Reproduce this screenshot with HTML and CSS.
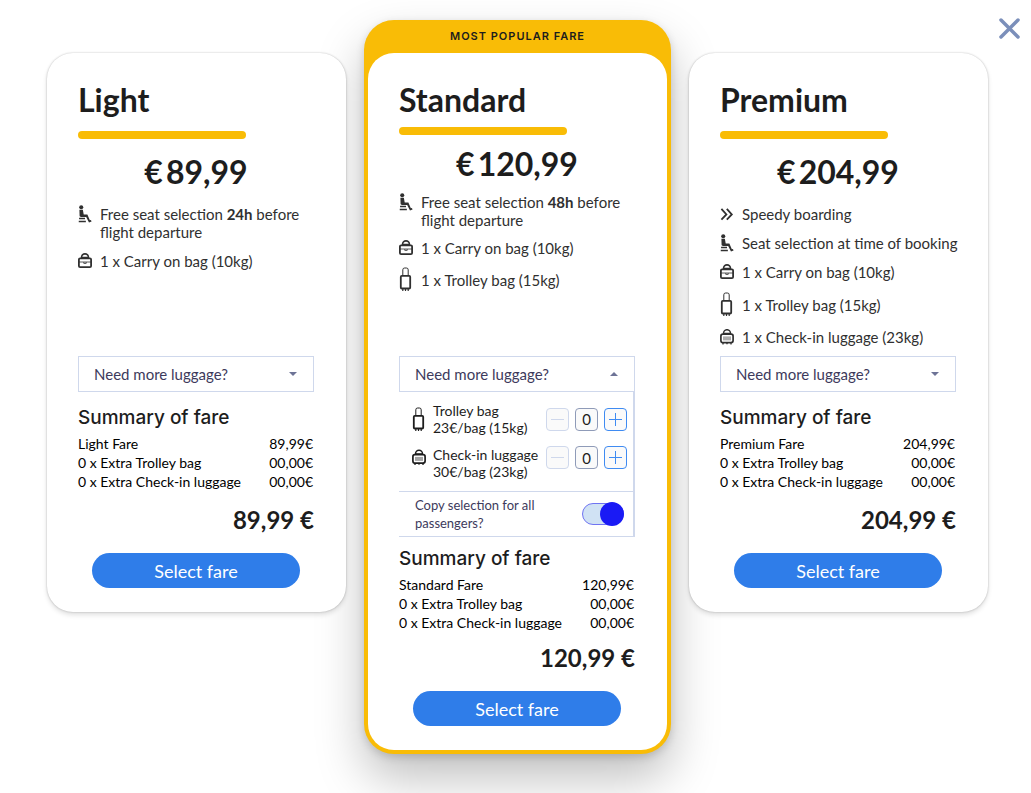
FILE: index.html
```html
<!DOCTYPE html>
<html lang="en">
  <head>
    <meta charset="UTF-8" />
    <meta name="viewport" content="width=device-width, initial-scale=1.0" />
    <title>Choose your fare</title>
    <link rel="stylesheet" href="styles.css">
  </head>
  <body>
    <!-- Icon sprite -->
    <svg class="sprite" aria-hidden="true">
      <symbol id="icon-seat" viewBox="1.500 0.500 13 16.700">
        <circle cx="4.500" cy="2.600" r="1.900" fill="currentColor" />
        <path d="M2.800 5h3.200l.8 4.200h3.400l2.300 5.400 1-.2.6 1.400-2.400.9-2.600-5H4.200L3 11z" fill="currentColor" />
        <path d="M2.500 13h5.500M2.200 15.800h6.600" fill="none" stroke="currentColor" stroke-width="1.500" />
      </symbol>
      <symbol id="icon-carry" viewBox="0 0 14 16">
        <path d="M3.500 5.200V4.400a3.500 3.500 0 0 1 7 0v.8M3.700 4.600h6.600" fill="none" stroke="currentColor" stroke-width="1.600" />
        <rect x=".9" y="5.400" width="12.200" height="8.800" rx="1.200" fill="none" stroke="currentColor" stroke-width="1.800" />
        <path d="M1 9h12M5.800 9v1.400h2.400V9" fill="none" stroke="currentColor" stroke-width=".8" />
      </symbol>
      <symbol id="icon-trolley" viewBox="0 0 14 25">
        <path d="M3.800 9V2.800A1.800 1.800 0 0 1 5.600 1h1.800a1.800 1.800 0 0 1 1.800 1.800V9" fill="none" stroke="currentColor" stroke-width="1" />
        <rect x="1.800" y="8.900" width="9.400" height="12.600" rx="1" fill="none" stroke="currentColor" stroke-width="1.800" />
        <path d="M3.800 22v2M6.500 22v2M9.200 22v2" stroke="currentColor" stroke-width="1.200" />
      </symbol>
      <symbol id="icon-checkin" viewBox="0 0 14 16">
        <path d="M3.500 5.200V4.200a3.500 3.500 0 0 1 7 0v1M3.500 4.600h7" fill="none" stroke="currentColor" stroke-width="1.500" />
        <rect x=".9" y="5.200" width="12.200" height="8.400" rx="2" fill="none" stroke="currentColor" stroke-width="1.700" />
        <path d="M4 7.400v4M6 7.400v4M8 7.400v4M10 7.400v4" stroke="currentColor" stroke-width=".8" />
        <path d="M3 13.600v2M7 13.600v1.600M11 13.600v2" stroke="currentColor" stroke-width="1.300" />
      </symbol>
      <symbol id="icon-speedy" viewBox="0 0 14 18">
        <path d="M1.400 3.800L6.400 9.400l-5 5.200M6.800 3.800l5 5.600-5 5.200" fill="none" stroke="currentColor" stroke-width="1.800" />
      </symbol>
    </svg>

    <button class="close" aria-label="Close">
      <svg width="22" height="22" viewBox="0 0 22 22">
        <path d="M3 2l17 17M20 2L3 19" stroke="currentColor" stroke-width="3.500" stroke-linecap="round" />
      </svg>
    </button>

    <main class="fares">
      <section class="fare">
        <div class="card">
          <div class="card-top">
            <h2>Light</h2>
            <div class="bar"></div>
            <p class="price"><span>€</span><span>89,99</span></p>
            <ul class="features">
              <li class="wrap">
                <svg class="icon"><use href="#icon-seat" /></svg>
                <span>Free seat selection <strong>24h</strong> before<br>flight departure</span>
              </li>
              <li>
                <svg class="icon icon-bag"><use href="#icon-carry" /></svg>
                <span>1 x Carry on bag (10kg)</span>
              </li>
            </ul>
          </div>

          <details class="luggage">
            <summary>Need more luggage?</summary>
          </details>

          <div class="summary">
            <h3>Summary of fare</h3>
            <table>
              <tr><td>Light Fare</td><td>89,99€</td></tr>
              <tr><td>0 x Extra Trolley bag</td><td>00,00€</td></tr>
              <tr><td>0 x Extra Check-in luggage</td><td>00,00€</td></tr>
            </table>
            <p class="total">89,99 €</p>
            <button class="select-fare">Select fare</button>
          </div>
        </div>
      </section>

      <section class="fare popular">
        <div class="ribbon">MOST POPULAR FARE</div>
        <div class="card">
          <div class="card-top">
            <h2>Standard</h2>
            <div class="bar"></div>
            <p class="price"><span>€</span><span>120,99</span></p>
            <ul class="features">
              <li class="wrap">
                <svg class="icon"><use href="#icon-seat" /></svg>
                <span>Free seat selection <strong>48h</strong> before<br>flight departure</span>
              </li>
              <li>
                <svg class="icon icon-bag"><use href="#icon-carry" /></svg>
                <span>1 x Carry on bag (10kg)</span>
              </li>
              <li>
                <svg class="icon icon-trolley"><use href="#icon-trolley" /></svg>
                <span>1 x Trolley bag (15kg)</span>
              </li>
            </ul>
          </div>

          <details class="luggage" open>
            <summary>Need more luggage?</summary>
            <div class="panel">
              <div class="extra">
                <svg class="icon icon-trolley"><use href="#icon-trolley" /></svg>
                <label for="trolley">Trolley bag<br>23€/bag (15kg)</label>
                <div class="stepper">
                  <button class="minus" aria-label="Remove trolley bag" disabled></button>
                  <input type="text" id="trolley" value="0" inputmode="numeric" />
                  <button class="plus" aria-label="Add trolley bag"></button>
                </div>
              </div>
              <div class="extra">
                <svg class="icon icon-bag"><use href="#icon-checkin" /></svg>
                <label for="checkin">Check-in luggage<br>30€/bag (23kg)</label>
                <div class="stepper">
                  <button class="minus" aria-label="Remove check-in luggage" disabled></button>
                  <input type="text" id="checkin" value="0" inputmode="numeric" />
                  <button class="plus" aria-label="Add check-in luggage"></button>
                </div>
              </div>
              <div class="copy">
                <label for="copy-all">Copy selection for all passengers?</label>
                <input type="checkbox" id="copy-all" class="toggle" checked />
              </div>
            </div>
          </details>

          <div class="summary">
            <h3>Summary of fare</h3>
            <table>
              <tr><td>Standard Fare</td><td>120,99€</td></tr>
              <tr><td>0 x Extra Trolley bag</td><td>00,00€</td></tr>
              <tr><td>0 x Extra Check-in luggage</td><td>00,00€</td></tr>
            </table>
            <p class="total">120,99 €</p>
            <button class="select-fare">Select fare</button>
          </div>
        </div>
      </section>

      <section class="fare">
        <div class="card">
          <div class="card-top">
            <h2>Premium</h2>
            <div class="bar"></div>
            <p class="price"><span>€</span><span>204,99</span></p>
            <ul class="features">
              <li>
                <svg class="icon"><use href="#icon-speedy" /></svg>
                <span>Speedy boarding</span>
              </li>
              <li>
                <svg class="icon"><use href="#icon-seat" /></svg>
                <span>Seat selection at time of booking</span>
              </li>
              <li>
                <svg class="icon icon-bag"><use href="#icon-carry" /></svg>
                <span>1 x Carry on bag (10kg)</span>
              </li>
              <li>
                <svg class="icon icon-trolley"><use href="#icon-trolley" /></svg>
                <span>1 x Trolley bag (15kg)</span>
              </li>
              <li>
                <svg class="icon icon-bag"><use href="#icon-checkin" /></svg>
                <span>1 x Check-in luggage (23kg)</span>
              </li>
            </ul>
          </div>

          <details class="luggage">
            <summary>Need more luggage?</summary>
          </details>

          <div class="summary">
            <h3>Summary of fare</h3>
            <table>
              <tr><td>Premium Fare</td><td>204,99€</td></tr>
              <tr><td>0 x Extra Trolley bag</td><td>00,00€</td></tr>
              <tr><td>0 x Extra Check-in luggage</td><td>00,00€</td></tr>
            </table>
            <p class="total">204,99 €</p>
            <button class="select-fare">Select fare</button>
          </div>
        </div>
      </section>
    </main>
  </body>
</html>
```

FILE: styles.css
```css
:root {
  --text-color: #1d1d1d;
  --feature-text: #303030;
  --muted-text: #3d3a5c;
  --yellow: #f9bc06;
  --blue: #2f7de9;
  --toggle-blue: #1a1af5;
  --line-color: #cfd8ec;

  --text-sm: 13px;
  --text-base: 14px;
  --text-md: 15px;
  --text-lg: 19px;
  --text-xl: 24px;
  --text-xxl: 32px;
}

* {
  box-sizing: border-box;
}

body {
  margin: 0;
  font-family: Lato, sans-serif;
  font-size: var(--text-md);
  line-height: 18px;
  color: var(--text-color);
  background-color: #ffffff;
}

h2,
h3,
p,
ul {
  margin: 0;
  padding: 0;
}

button,
input {
  font-family: inherit;
  color: inherit;
  margin: 0;
  padding: 0;
}

button {
  cursor: pointer;
}

.sprite {
  display: none;
}

.close {
  position: absolute;
  top: 18px;
  right: 11px;
  height: 22px;
  border: none;
  background: none;
  color: #7b8fba;
}

.close svg {
  display: block;
}

.fares {
  display: grid;
  grid-template-columns: repeat(3, minmax(0, 1fr));
  gap: 22px;
  align-items: start;
  padding: 20px 43px 39px 47px;
}

.fare {
  padding-top: 33px;
  z-index: 1;
}

.card {
  padding: 0 32px 24px 31px;
  border-radius: 26px;
  background-color: #ffffff;
  box-shadow: 0 0 2px rgba(0, 0, 0, 0.25), 0 3px 5px rgba(0, 0, 0, 0.12);
}

.popular {
  z-index: 0;
  margin: 0 -4px;
  padding: 0 4px 4px;
  border-radius: 30px;
  background-color: var(--yellow);
  box-shadow: 0 24px 48px rgba(0, 0, 0, 0.25), 0 3px 8px rgba(0, 0, 0, 0.15);
}

.popular .card {
  box-shadow: none;
}

.ribbon {
  height: 33px;
  font-family: Inter, sans-serif;
  font-size: 11px;
  font-weight: 600;
  line-height: 33px;
  letter-spacing: 1px;
  text-align: center;
}

.card-top {
  min-height: 303px;
  padding-top: 27px;
}

h2 {
  font-size: var(--text-xxl);
  font-weight: 700;
  line-height: 40px;
}

.bar {
  width: 71%;
  height: 8px;
  margin-top: 11px;
  border-radius: 4px;
  background-color: var(--yellow);
}

.popular .bar {
  margin-top: 7px;
}

.price {
  display: flex;
  justify-content: center;
  gap: 3px;
  margin: 14px 0 12px;
  font-size: var(--text-xxl);
  font-weight: 700;
  line-height: 38px;
}

.popular .price {
  margin: 10px 0 8px;
}

.features {
  display: flex;
  flex-direction: column;
  gap: 11px;
  padding-top: 2px;
  list-style: none;
  white-space: nowrap;
  color: var(--feature-text);
}

.popular .features {
  gap: 10px;
}

.features li {
  display: flex;
  align-items: center;
  gap: 8px;
}

.features .wrap {
  align-items: flex-start;
}

.icon {
  flex: none;
  width: 14px;
  height: 18px;
}

.icon-bag {
  height: 16px;
}

.icon-trolley {
  height: 25px;
}

.luggage summary {
  display: flex;
  justify-content: space-between;
  align-items: center;
  height: 36px;
  padding: 0 16px 0 15px;
  border: 1px solid var(--line-color);
  color: var(--muted-text);
  list-style: none;
  cursor: pointer;
}

.luggage summary::after {
  content: '';
  border: 4px solid transparent;
  border-top-color: #6d7396;
  border-bottom-width: 0;
}

.luggage[open] summary::after {
  border-top-width: 0;
  border-bottom: 4px solid #6d7396;
}

.panel {
  padding-top: 10px;
  border-right: 2px solid var(--line-color);
  border-bottom: 1px solid var(--line-color);
  font-size: var(--text-base);
  line-height: 17px;
}

.extra {
  display: flex;
  align-items: center;
  gap: 7px;
  padding: 0 6px 0 13px;
}

.extra + .extra {
  align-items: flex-start;
  margin-top: 10px;
}

.extra .icon-bag {
  height: 23px;
}

.extra label {
  flex: 1;
  white-space: nowrap;
}

.stepper {
  display: flex;
  gap: 6px;
}

.stepper button,
.stepper input {
  width: 23px;
  height: 23px;
  border: 1px solid #8f9bb8;
  border-radius: 4px;
  background-color: #fafafa;
  font-size: var(--text-md);
  text-align: center;
}

.stepper button {
  display: grid;
  place-items: center;
  color: #3f8bf2;
  border-color: currentColor;
}

.stepper .minus {
  color: #cfd8ec;
}

.stepper button::before,
.stepper .plus::after {
  content: '';
  grid-area: 1 / 1;
  width: 13px;
  height: 1px;
  background-color: currentColor;
}

.stepper .plus::after {
  width: 1px;
  height: 13px;
}

.copy {
  display: flex;
  justify-content: space-between;
  align-items: center;
  margin-top: 11px;
  padding: 4px 9px 4px 16px;
  border-top: 1px solid var(--line-color);
  font-size: var(--text-sm);
  line-height: 18px;
  color: var(--muted-text);
}

.copy label {
  width: 140px;
}

.toggle {
  display: flex;
  justify-content: flex-end;
  align-items: center;
  width: 42px;
  height: 22px;
  border: 1px solid #6f74f2;
  border-radius: 11px;
  background-color: #d0e2f4;
  appearance: none;
  cursor: pointer;
}

.toggle::before {
  content: '';
  flex: none;
  width: 24px;
  height: 24px;
  margin-right: -1px;
  border-radius: 50%;
  background-color: var(--toggle-blue);
}

.toggle:not(:checked) {
  justify-content: flex-start;
}

.summary {
  padding-top: 14px;
}

.popular .summary {
  padding-top: 10px;
}

h3 {
  font-family: Inter, sans-serif;
  font-size: var(--text-lg);
  font-weight: 500;
  line-height: 24px;
}

table {
  width: 100%;
  margin-top: 4px;
  border-collapse: collapse;
  font-size: var(--text-base);
  line-height: 19px;
  color: #000000;
}

td {
  padding: 0;
}

td:last-child {
  padding-right: 1px;
  text-align: right;
}

.total {
  margin-top: 13px;
  font-size: var(--text-xl);
  font-weight: 700;
  line-height: 32px;
  text-align: right;
}

.popular .total {
  margin-top: 10px;
}

.select-fare {
  display: block;
  width: 88%;
  height: 35px;
  margin: 17px auto 0;
  border: none;
  border-radius: 18px;
  background-color: var(--blue);
  color: #ffffff;
  font-size: 18px;
}

.select-fare:hover {
  background-color: #1f6bd3;
}
```
